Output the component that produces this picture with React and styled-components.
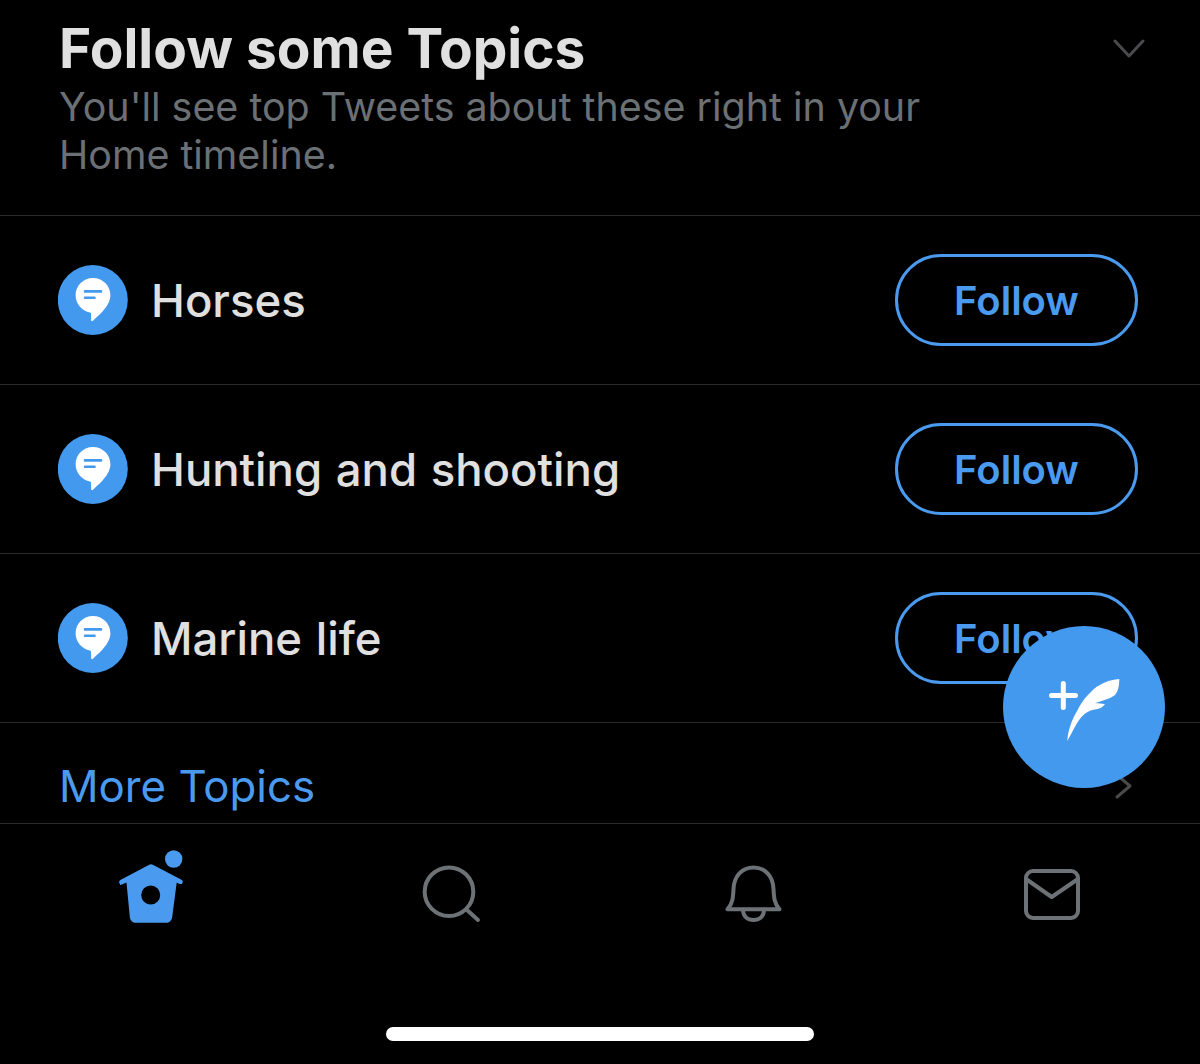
import React from 'react'
import styled, { createGlobalStyle } from 'styled-components'

const GlobalStyle = createGlobalStyle`
	html, body {
		margin: 0;
		background: #000;
	}
	body {
		font-family: Inter, "Liberation Sans", sans-serif;
	}
`

const Page = styled.div`
	position: relative;
	display: flex;
	flex-direction: column;
	width: 1200px;
	height: 1064px;
	overflow: hidden;
	background: #000;
`

const Header = styled.header`
	box-sizing: border-box;
	height: 216px;
	padding: 16px 55px 0 59px;
	border-bottom: 1px solid #2b2b2d;
`

const TitleRow = styled.div`
	display: flex;
	justify-content: space-between;
	align-items: center;
`

const Title = styled.h1`
	margin: 0;
	font-size: 55px;
	line-height: 64px;
	font-weight: 700;
	color: #e0e0e0;
`

const Subtitle = styled.p`
	width: 900px;
	margin: 3px 0 0;
	font-size: 39.4px;
	line-height: 48px;
	font-weight: 400;
	color: #6b7074;
`

const Row = styled.div`
	box-sizing: border-box;
	display: flex;
	align-items: center;
	height: 169px;
	padding: 0 62px 0 58px;
	border-bottom: 1px solid #2b2b2d;
`

const TopicBadge = styled.svg`
	flex: none;
	width: 70px;
	height: 70px;
	margin-right: 23px;
`

const TopicName = styled.span`
	flex: 1;
	font-size: 45.5px;
	font-weight: 500;
	word-spacing: 1.5px;
	color: #e0e0e0;
`

const FollowButton = styled.button`
	box-sizing: border-box;
	width: 243px;
	height: 92px;
	padding: 0;
	border: 3px solid #4a9bf0;
	border-radius: 46px;
	background: transparent;
	font-family: inherit;
	font-size: 40px;
	font-weight: 600;
	color: #4a9bf0;
`

const MoreRow = styled.div`
	box-sizing: border-box;
	display: flex;
	justify-content: space-between;
	align-items: center;
	height: 101px;
	padding: 26px 66px 0 59px;
	border-bottom: 1px solid #2b2b2d;
`

const MoreLink = styled.a`
	font-size: 43.8px;
	color: #4a9bf0;
`

const TabBar = styled.nav`
	flex: 1;
	display: flex;
	flex-direction: column;
	align-items: center;
`

const Tabs = styled.div`
	display: grid;
	grid-template-columns: repeat(4, 300px);
	padding-top: 26px;
`

const Tab = styled.div`
	display: flex;
	justify-content: center;
`

const TabIcon = styled.svg`
	width: 80px;
	height: 80px;
	fill: none;
	stroke: #6d7277;
	stroke-width: 4;
	stroke-linecap: round;
	stroke-linejoin: round;
`

const HomeIndicator = styled.div`
	width: 428px;
	height: 14px;
	margin-top: auto;
	margin-bottom: 23px;
	border-radius: 7px;
	background: #fff;
`

const ComposeButton = styled.button`
	position: absolute;
	left: 1003px;
	top: 626px;
	width: 162px;
	height: 162px;
	padding: 0;
	border: 0;
	border-radius: 50%;
	background: #4399ee;
`

const ComposeIcon = styled.svg`
	display: block;
	width: 162px;
	height: 162px;
`

const Chevron = styled.svg`
	flex: none;
	width: ${p => p.$w}px;
	height: ${p => p.$h}px;
	fill: none;
	stroke: #4a4a4c;
	stroke-width: 3;
	stroke-linecap: round;
	stroke-linejoin: round;
`

const topics = ['Horses', 'Hunting and shooting', 'Marine life']

const TopicIcon = () => (
	<TopicBadge viewBox="0 0 70 70">
		<circle cx="34.8" cy="35" r="35" fill="#4399ee" />
		<path
			fill="#fff"
			d="M35 13C25.4 13 17.6 20.7 17.6 30.3C17.6 39.2 24.4 46.3 31.9 47.4C32.6 47.5 33 48 33 48.8L33.2 55.2C33.2 56.4 34.3 56.6 35 55.8C40.5 50.5 52.4 41 52.4 30.3C52.4 20.7 44.6 13 35 13Z"
		/>
		<path stroke="#4399ee" strokeWidth="2.6" strokeLinecap="round" d="M27 26.4H43M27 32.8H36.5" />
	</TopicBadge>
)

export default function App() {
	return (
		<Page>
			<GlobalStyle />
			<Header>
				<TitleRow>
					<Title>Follow some Topics</Title>
					<Chevron $w={32} $h={24} viewBox="0 0 32 24">
						<path d="M2 5L16 20L30 5" />
					</Chevron>
				</TitleRow>
				<Subtitle>You'll see top Tweets about these right in your Home timeline.</Subtitle>
			</Header>
			{topics.map(name => (
				<Row key={name}>
					<TopicIcon />
					<TopicName>{name}</TopicName>
					<FollowButton>Follow</FollowButton>
				</Row>
			))}
			<MoreRow>
				<MoreLink>More Topics</MoreLink>
				<Chevron $w={20} $h={28} viewBox="0 0 20 28">
					<path d="M3 3L16 14L3 25" />
				</Chevron>
			</MoreRow>
			<TabBar>
				<Tabs>
					<Tab>
						<TabIcon viewBox="0 0 80 80">
							<circle cx="63.7" cy="9" r="8.7" fill="#4a9bf0" stroke="none" />
							<path
								fill="#4a9bf0"
								stroke="none"
								fillRule="evenodd"
								d="M41 14.3C41.6 14.3 42.2 14.5 42.8 14.8L71.5 29.8C72.8 30.6 73.1 31.8 72.5 32.9C71.9 34.1 70.7 34.3 69.5 33.9L66.7 32.5L62.2 67C61.8 70.5 59.3 72.8 56 72.8H26C22.7 72.8 20.2 70.5 19.8 67L16.5 32.5L12.5 34.2C11.3 34.6 10 34.4 9.4 33.2C8.8 32.1 9.1 30.9 10.4 30.1L39.2 14.8C39.8 14.5 40.4 14.3 41 14.3ZM40.7 35.5A9.5 9.5 0 1 0 40.7 54.5A9.5 9.5 0 1 0 40.7 35.5Z"
							/>
						</TabIcon>
					</Tab>
					<Tab>
						<TabIcon viewBox="0 0 80 80">
							<circle cx="39" cy="41.7" r="24.3" />
							<path d="M57 60L68 70" />
						</TabIcon>
					</Tab>
					<Tab>
						<TabIcon viewBox="0 0 80 80">
							<path d="M17.5 59.3H69.5C64 53 64 47 63.5 39C63 26 55 17.5 43.5 17.5C32 17.5 24 26 23.5 39C23 47 23 53 17.5 59.3Z" />
							<path d="M33 59.5C33 67 38 70 43.5 70C49 70 54 67 54 59.5" />
						</TabIcon>
					</Tab>
					<Tab>
						<TabIcon viewBox="0 0 80 80">
							<rect x="16" y="21" width="52" height="47" rx="7" />
							<path d="M16 29L41.7 47L68 29" />
						</TabIcon>
					</Tab>
				</Tabs>
				<HomeIndicator />
			</TabBar>
			<ComposeButton>
				<ComposeIcon viewBox="0 0 162 162">
					<path stroke="#fff" strokeWidth="5" strokeLinecap="round" d="M48.5 69.5H72.5M60.3 57.5V81.5" />
					<path
						fill="#fff"
						d="M64.3 115C64.5 110 65.5 105.5 67 100.7C68.8 95 71 90 73.7 85.7C76.2 81 79 76 82 72.3C85.5 68 89.5 64 93.7 60.7C97.5 58.5 101.5 56.5 105.3 55C109 54 112.8 53.3 116.3 53C116.3 56 116 59.5 115.3 62.3C114.5 65 113.5 67.2 112 69C109.5 71 106.8 72.3 103.7 73.3L92 77.3C95.5 77.3 99 77.6 102 78.3C100.5 80 99 81.3 97 82.3C94 83.3 90 83.8 87 84.7C83.8 86 81 88.2 78.7 90.7C76 93.8 74 97 72 100.7C69.8 105 67 110 64.3 115Z"
					/>
				</ComposeIcon>
			</ComposeButton>
		</Page>
	)
}
